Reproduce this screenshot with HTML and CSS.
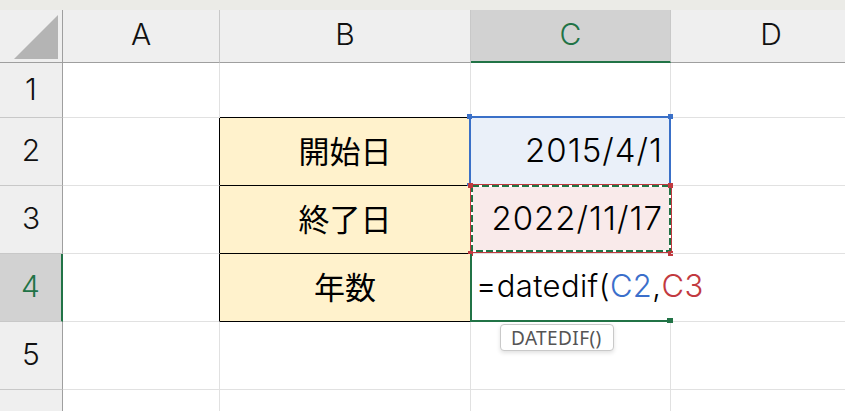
FILE: index.html
```html
<!DOCTYPE html>
<html lang="ja">
<head>
<meta charset="utf-8">
<title>datedif</title>
<link rel="stylesheet" href="styles.css">
</head>
<body>
<div class="topbar"></div>
<div class="sheet">
  <div class="hd corner"><svg class="tri" width="46" height="46" viewBox="0 0 46 46"><polygon points="45,1 45,45 1,45" fill="#b4b4b4"/></svg></div>
  <div class="hd col">A</div>
  <div class="hd col">B</div>
  <div class="hd col active-col">C</div>
  <div class="hd col last">D</div>

  <div class="hd row">1</div>
  <div class="cell"></div>
  <div class="cell b-bottom"></div>
  <div class="cell"></div>
  <div class="cell last"></div>

  <div class="hd row">2</div>
  <div class="cell b-right"></div>
  <div class="cell label">開始日</div>
  <div class="cell date c2">2015/4/1
    <div class="sel-blue"><i class="h tl"></i><i class="h tr"></i><i class="h bl"></i><i class="h br"></i></div>
  </div>
  <div class="cell last"></div>

  <div class="hd row">3</div>
  <div class="cell b-right"></div>
  <div class="cell label">終了日</div>
  <div class="cell date c3">2022/11/17
    <svg class="ants" width="204" height="71" viewBox="0 0 204 71">
      <rect x="1.5" y="1.5" width="201" height="68" fill="none" stroke="#c0393f" stroke-width="1"/>
      <rect x="3" y="3" width="198" height="65" fill="none" stroke="#ffffff" stroke-width="2"/>
      <rect x="3" y="3" width="198" height="65" fill="none" stroke="#217346" stroke-width="2" stroke-dasharray="7 3"/>
    </svg>
    <i class="h r tl"></i><i class="h r tr"></i><i class="h r bl"></i><i class="h r br"></i>
  </div>
  <div class="cell last"></div>

  <div class="hd row active-row">4</div>
  <div class="cell b-right"></div>
  <div class="cell label">年数</div>
  <div class="cell formula">=datedif(<span class="ref-blue">C2</span>,<span class="ref-red">C3</span>
    <i class="fill"></i>
    <div class="tip">DATEDIF()</div>
  </div>
  <div class="cell last"></div>

  <div class="hd row">5</div>
  <div class="cell"></div>
  <div class="cell"></div>
  <div class="cell"></div>
  <div class="cell last"></div>

  <div class="hd row"></div>
  <div class="cell"></div>
  <div class="cell"></div>
  <div class="cell"></div>
  <div class="cell last"></div>
</div>
</body>
</html>
```

FILE: styles.css
```css
* { box-sizing: border-box; }
html, body { margin: 0; padding: 0; }
body {
  width: 845px;
  height: 411px;
  overflow: hidden;
  background: #ffffff;
  font-family: Inter, "Noto Sans CJK JP", sans-serif;
  font-weight: 300;
  color: #000;
}
.topbar {
  height: 10px;
  background: #ebebe7;
}
.sheet {
  display: grid;
  grid-template-columns: 63px 157px 251px 200px 200px;
  grid-template-rows: 53px 55px 68px 68px 68px 68px 30px;
  width: 871px;
}
.hd {
  background: #efefef;
  display: flex;
  align-items: center;
  justify-content: center;
  font-size: 30px;
  color: #111;
}
.hd.col {
  border-right: 1px solid #c8c8c8;
  border-bottom: 1px solid #9f9f9f;
  padding-bottom: 4px;
}
.hd.col.last { border-right: none; }
.hd.corner {
  border-right: 1px solid #9f9f9f;
  border-bottom: 1px solid #9f9f9f;
  justify-content: flex-start;
  align-items: flex-start;
  padding: 4px 0 0 13px;
}
.hd.row {
  border-right: 1px solid #9f9f9f;
  border-bottom: 1px solid #c8c8c8;
  padding-bottom: 3px;
}
.active-col {
  background: #d2d2d2;
  color: #217346;
  border-bottom: 2px solid #217346 !important;
}
.active-row {
  background: #d2d2d2;
  color: #217346;
  border-right: 2px solid #217346 !important;
}
.cell {
  border-right: 1px solid #e1e1e1;
  border-bottom: 1px solid #e1e1e1;
  display: flex;
  align-items: center;
  font-size: 31px;
  position: relative;
}
.cell.last { border-right: none; }
.b-bottom { border-bottom-color: #000; }
.b-right { border-right-color: #000; }
.label {
  background: #fff2cc;
  border-right-color: #000;
  border-bottom-color: #000;
  justify-content: center;
  padding-bottom: 4px;
  font-family: "Noto Sans CJK JP", sans-serif;
  font-weight: 400;
}
.date {
  justify-content: flex-end;
  padding-right: 7px;
  padding-bottom: 3px;
  font-size: 33px;
  letter-spacing: 1px;
}
.c2 { background: #eaf0f9; }
.c3 { background: #f9eaea; }
.sel-blue {
  position: absolute;
  top: -2px; left: -2px; right: -1px; bottom: -1px;
  border: 2px solid #3a70c8;
}
.h {
  position: absolute;
  width: 5px; height: 5px;
  background: #3a70c8;
}
.sel-blue .tl { top: -4px; left: -4px; }
.sel-blue .tr { top: -4px; right: -4px; }
.sel-blue .bl { bottom: -4px; left: -4px; }
.sel-blue .br { bottom: -4px; right: -4px; }
.h.r { background: #c0393f; }
.c3 .tl { top: -3px; left: -3px; }
.c3 .tr { top: -3px; right: -3px; }
.c3 .bl { bottom: -3px; left: -3px; }
.c3 .br { bottom: -3px; right: -3px; }
.ants {
  position: absolute;
  top: -3px; left: -2px;
}
.formula {
  border-left: 2px solid #217346;
  border-bottom: 2px solid #217346;
  border-right-color: transparent;
  margin-left: -1px;
  padding-left: 4px;
  padding-bottom: 4px;
  white-space: nowrap;
  overflow: visible;
  z-index: 2;
  font-size: 31px;
  letter-spacing: 0.4px;
}
.ref-blue { color: #3b6fcb; }
.ref-red { color: #c23a3f; }
.fill {
  position: absolute;
  right: -3px; bottom: -3px;
  width: 6px; height: 5px;
  background: #217346;
}
.tip {
  position: absolute;
  left: 28px;
  bottom: -31px;
  width: 114px; height: 27px;
  border: 1px solid #c9c9c9;
  border-radius: 4px;
  background: #fff;
  box-shadow: 0 2px 4px rgba(0,0,0,0.12);
  font-family: "Noto Sans", sans-serif;
  font-weight: 400;
  font-size: 19px;
  letter-spacing: 0.4px;
  color: #555;
  display: flex;
  align-items: center;
  padding-left: 10px;
}
```
